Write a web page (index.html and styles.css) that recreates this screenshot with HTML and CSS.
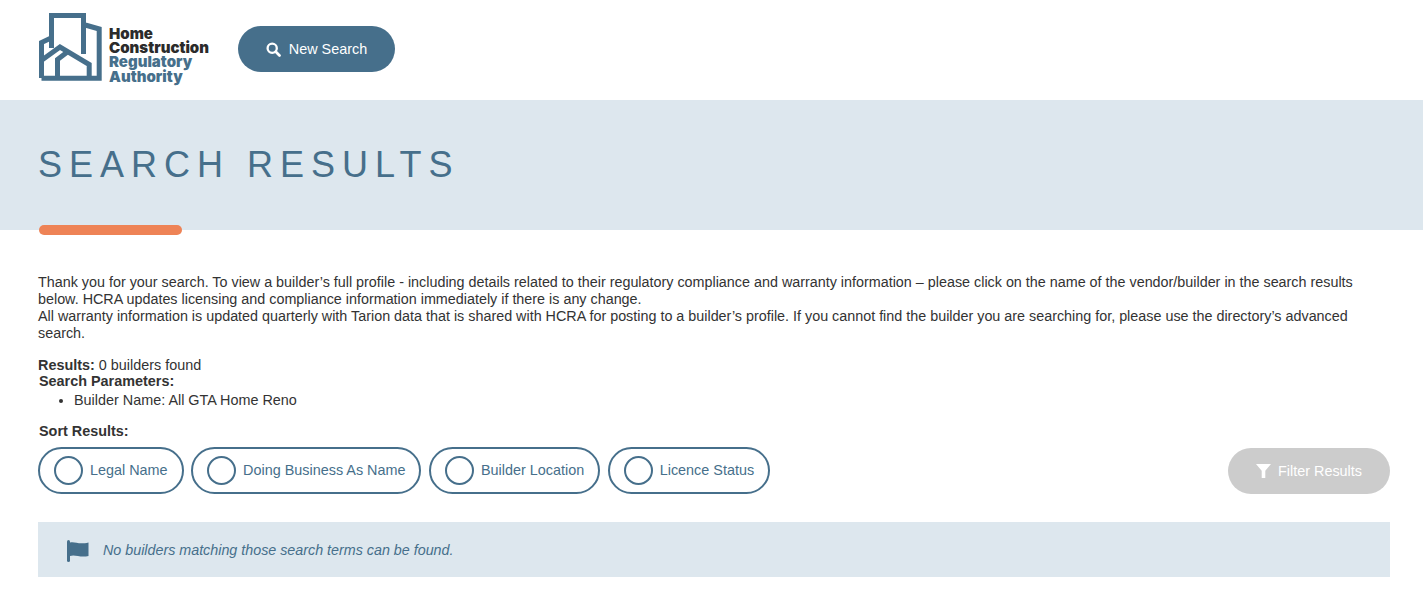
FILE: index.html
```html
<!DOCTYPE html>
<html>
<head>
    <title>Search Results</title>
    <link rel="stylesheet" href="styles.css">
</head>
<body>
    <header class="site-header">
        <a class="logo" href="#">
            <svg class="logo-mark" width="64" height="70" viewBox="0 0 64 70" fill="none" stroke="#466f8b" stroke-width="5">
                <path d="M2.5 65V29.5L11 25.5M12.5 35V2.5H44.5V41M44.5 11.5L60.2 16V65.2H2.5"/>
                <path d="M3 47L21 34L50.2 51.5V65"/>
                <path d="M18.5 65V46.5L29 38.5"/>
            </svg>
            <span class="logo-text">
                <span>Home</span>
                <span>Construction</span>
                <span class="logo-blue">Regulatory</span>
                <span class="logo-blue">Authority</span>
            </span>
        </a>
        <a class="btn-search" href="#">
            <svg width="15" height="15" viewBox="0 0 15 15" fill="none" stroke="#fff">
                <circle cx="6.2" cy="6.2" r="4.6" stroke-width="2.3"/>
                <path d="M9.8 9.8L13.5 13.5" stroke-width="2.7" stroke-linecap="round"/>
            </svg>
            New Search
        </a>
    </header>

    <section class="banner">
        <h1>Search Results</h1>
    </section>
    <div class="accent-bar"></div>

    <main class="content">
        <p class="intro">Thank you for your search. To view a builder’s full profile - including details related to their regulatory compliance and warranty information – please click on the name of the vendor/builder in the search results below. HCRA updates licensing and compliance information immediately if there is any change.<br>All warranty information is updated quarterly with Tarion data that is shared with HCRA for posting to a builder’s profile. If you cannot find the builder you are searching for, please use the directory’s advanced search.</p>

        <div class="summary">
            <div><strong>Results:</strong> 0 builders found</div>
            <div class="params-title"><strong>Search Parameters:</strong></div>
            <ul class="params">
                <li>Builder Name: All GTA Home Reno</li>
            </ul>
        </div>

        <div class="sort-title"><strong>Sort Results:</strong></div>
        <div class="sort-row">
            <div class="sort-options">
                <label class="sort-pill"><span class="radio"></span>Legal Name</label>
                <label class="sort-pill"><span class="radio"></span>Doing Business As Name</label>
                <label class="sort-pill"><span class="radio"></span>Builder Location</label>
                <label class="sort-pill"><span class="radio"></span>Licence Status</label>
            </div>
            <button class="btn-filter">
                <svg width="15" height="14" viewBox="0 0 15 14" fill="#fff">
                    <path d="M0 0H15L9.3 6.8V14H5.7V6.8Z"/>
                </svg>
                Filter Results
            </button>
        </div>

        <div class="notice">
            <svg width="22" height="22" viewBox="0 0 22 22" fill="#466f8b">
                <rect x="0" y="0" width="3" height="22" rx="1.5"/>
                <path d="M3 2.5C8 1 11 5 21.5 2.5V16C13 18 8 14 3 16Z"/>
            </svg>
            <em>No builders matching those search terms can be found.</em>
        </div>
    </main>
</body>
</html>
```

FILE: styles.css
```css
* {
    box-sizing: border-box;
}

body {
    margin: 0;
    font-family: "Liberation Sans", Arial, sans-serif;
    font-size: 14.4px;
    line-height: 17px;
    color: #333;
    background-color: #fff;
}

/* Header */
.site-header {
    height: 100px;
    padding: 13px 38px 0;
    display: flex;
    align-items: flex-start;
}

.logo {
    display: flex;
    width: 200px;
    text-decoration: none;
}

.logo-mark {
    margin-left: 1px;
    flex-shrink: 0;
}

.logo-text {
    display: flex;
    flex-direction: column;
    margin: 14px 0 0 6px;
    font-family: Inter, "Liberation Sans", sans-serif;
    font-size: 15px;
    font-weight: 900;
    line-height: 14.2px;
    color: #2b2b2b;
}

.logo-blue {
    color: #466f8b;
}

.btn-search {
    display: flex;
    align-items: center;
    justify-content: center;
    gap: 8px;
    width: 157px;
    height: 46px;
    margin-top: 13px;
    border-radius: 23px;
    background-color: #466f8b;
    color: #fff;
    text-decoration: none;
}

/* Banner */
.banner {
    height: 130px;
    padding: 44px 38px 0;
    background-color: #dde7ee;
}

.banner h1 {
    margin: 0;
    font-size: 36px;
    font-weight: 400;
    line-height: 42px;
    letter-spacing: 7px;
    text-transform: uppercase;
    color: #466f8b;
}

.accent-bar {
    width: 143px;
    height: 10px;
    margin: -5px 0 0 39px;
    border-radius: 5px;
    background-color: #ee8356;
}

/* Main content */
.content {
    padding: 0 33px 0 38px;
}

.intro {
    margin: 39px 0 0;
    font-size: 14.35px;
}

.summary {
    margin-top: 15px;
}

.params-title {
    margin-left: 1px;
    margin-top: -1px;
}

.params {
    margin: 2px 0 0;
    padding-left: 36px;
    line-height: 17px;
}

.sort-title {
    margin: 14px 0 0 1px;
}

.sort-row {
    display: flex;
    justify-content: space-between;
    align-items: center;
    margin-top: 7px;
}

.sort-options {
    display: flex;
    gap: 7.5px;
}

.sort-pill {
    display: flex;
    align-items: center;
    height: 47px;
    padding: 0 14px;
    border: 2px solid #466f8b;
    border-radius: 24px;
    color: #466f8b;
}

.radio {
    width: 29px;
    height: 29px;
    margin-right: 7px;
    border: 2px solid #466f8b;
    border-radius: 50%;
}

.btn-filter {
    display: flex;
    align-items: center;
    justify-content: center;
    gap: 7px;
    width: 162px;
    height: 46px;
    border: none;
    border-radius: 23px;
    background-color: #ccc;
    color: #fff;
    font-family: inherit;
    font-size: 14.4px;
}

.notice {
    display: flex;
    align-items: center;
    gap: 14px;
    height: 55px;
    margin-top: 28px;
    padding: 2px 0 0 29px;
    background-color: #dde7ee;
    color: #466f8b;
    font-size: 14.3px;
}
```
